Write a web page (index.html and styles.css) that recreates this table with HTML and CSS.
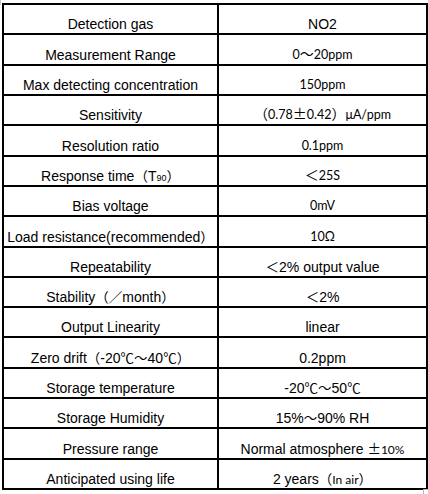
FILE: index.html
```html
<!DOCTYPE html>
<html lang="en">
<head>
    <meta charset="UTF-8">
    <meta name="viewport" content="width=device-width, initial-scale=1.0">
    <title>NO2 Sensor Specification</title>
    <link rel="stylesheet" href="styles.css">
</head>
<body>
    <span class="mark-top"></span>
    <div class="sheet">
        <table class="spec-table">
            <colgroup>
                <col class="col-name">
                <col class="col-value">
            </colgroup>
            <tbody>
                <tr><td>Detection gas</td><td>NO2</td></tr>
                <tr><td>Measurement Range</td><td class="cal">0<span class="cjk">～</span>20ppm</td></tr>
                <tr><td>Max detecting concentration</td><td class="cal">150ppm</td></tr>
                <tr><td>Sensitivity</td><td class="cal"><span class="cjk">（</span>0.78<span class="cjk">±</span>0.42<span class="cjk">）</span>μA/ppm</td></tr>
                <tr><td>Resolution ratio</td><td class="cal">0.1ppm</td></tr>
                <tr><td>Response time<span class="cjk">（</span>T<span class="small">90</span><span class="cjk">）</span></td><td class="cal"><span class="cjk">＜</span>25S</td></tr>
                <tr><td>Bias voltage</td><td class="cal">0mV</td></tr>
                <tr><td>Load resistance(recommended<span class="cjk">）</span></td><td class="cal">10Ω</td></tr>
                <tr><td>Repeatability</td><td><span class="cjk">＜</span>2% output value</td></tr>
                <tr><td>Stability<span class="cjk">（／</span>month<span class="cjk">）</span></td><td><span class="cjk">＜</span>2%</td></tr>
                <tr><td>Output Linearity</td><td>linear</td></tr>
                <tr><td>Zero drift<span class="cjk">（</span>-20<span class="cjk">℃～</span>40<span class="cjk">℃）</span></td><td>0.2ppm</td></tr>
                <tr><td>Storage temperature</td><td>-20<span class="cjk">℃～</span>50<span class="cjk">℃</span></td></tr>
                <tr><td>Storage Humidity</td><td>15%<span class="cjk">～</span>90% RH</td></tr>
                <tr><td>Pressure range</td><td>Normal atmosphere <span class="cjk">±</span><span class="cal-small">10%</span></td></tr>
                <tr><td>Anticipated using life</td><td>2 years<span class="cjk">（</span><span class="cal-small">In air</span><span class="cjk">）</span></td></tr>
            </tbody>
        </table>
    </div>
    <span class="mark-bottom"></span>
</body>
</html>
```

FILE: styles.css
```css
body {
    position: relative;
    margin: 0;
    min-height: 494px;
    background-color: #ffffff;
    color: #000000;
    font-family: 'Liberation Sans', Arial, 'Noto Sans CJK SC', sans-serif;
    font-size: 14px;
}
.sheet {
    padding: 3px 0 0 2px;
}
.spec-table {
    width: 424px;
    height: 487px;
    border-collapse: collapse;
    table-layout: fixed;
}
.col-name {
    width: 215px;
}
.col-value {
    width: 209px;
}
.spec-table td {
    height: 24px;
    border: 2px solid #000000;
    text-align: center;
    vertical-align: bottom;
    padding: 0 0 1px 0;
    line-height: 16px;
    white-space: nowrap;
}
.spec-table td span {
    line-height: 1;
}
.cjk {
    font-family: 'Noto Sans CJK SC', sans-serif;
    font-size: 13.5px;
}
.small {
    font-size: 9px;
}
.cal {
    font-family: Lato, 'Liberation Sans', 'Noto Sans CJK SC', sans-serif;
    font-size: 12.5px;
}
.cal .cjk {
    font-size: 14px;
}
.cal-small {
    font-family: Lato, 'Liberation Sans', sans-serif;
    font-size: 12px;
}
.mark-top {
    position: absolute;
    left: 0;
    top: 0;
    width: 2px;
    height: 5px;
    border-left: 1px solid #c8c8c8;
}
.mark-bottom {
    position: absolute;
    left: 423px;
    top: 489px;
    width: 5px;
    height: 5px;
    border-left: 1px solid #b4b4b4;
    border-top: 1px solid #b4b4b4;
}
```
